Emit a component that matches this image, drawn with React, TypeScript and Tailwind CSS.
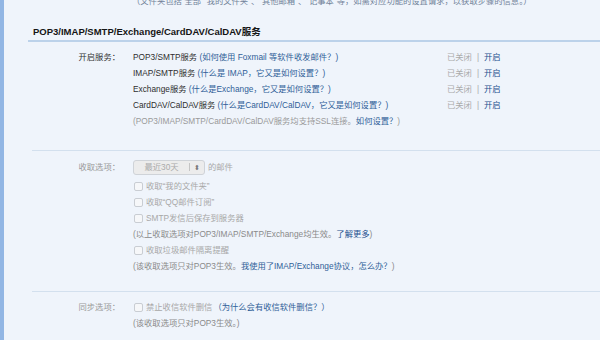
import React from "react";

const font = { fontFamily: '"Liberation Sans", "Noto Sans CJK SC", sans-serif' };

function Row({ label, labelClass = "text-[#333]", children }: { label?: string; labelClass?: string; children: React.ReactNode }) {
  return (
    <div className="flex h-[16px] items-center leading-[16px]">
      <div className={`w-[92px] shrink-0 text-right ${labelClass}`}>{label}</div>
      <div className="ml-[13px] flex min-w-0 flex-1 items-center whitespace-nowrap">{children}</div>
    </div>
  );
}

function Check({ children }: { children: React.ReactNode }) {
  return (
    <span className="flex items-center text-[#a8a8a8]">
      <span className="mr-[3px] ml-[1px] inline-block h-[9px] w-[9px] rounded-[2px] border border-[#c9cdd3] bg-[#f6f7f9]" />
      {children}
    </span>
  );
}

function ServiceRow({ label, name, help }: { label?: string; name: string; help: string }) {
  return (
    <Row label={label}>
      <div className="w-[314px] shrink-0 overflow-hidden text-[#2e2e2e]">
        {name} <span className="text-[#2f5f98]">({help})</span>
      </div>
      <span className="text-[#aaa]">已关闭</span>
      <span className="mx-[5px] text-[#aaa]">|</span>
      <span className="text-[#1d4f8e]">开启</span>
    </Row>
  );
}

export default function App() {
  return (
    <div className="flex h-[340px] w-[600px] overflow-hidden bg-[#eff4fb] text-[8.3px]" style={font}>
      <div className="w-[4px] shrink-0 bg-[#92b6e4]" />
      <div className="min-w-0 flex-1">
        <div className="mt-[-7px] h-[16px] overflow-hidden whitespace-nowrap pl-[128px] leading-[16px] text-[#72839a]">
          （文件夹包括“全部”“我的文件夹”、“其他邮箱”、“记事本”等，如需对应功能的设置请求，以获取步骤的信息。）
        </div>
        <div className="ml-[24px]">
          <div className="mt-[15px] flex h-[16px] items-center pl-[5px] text-[9.5px] font-bold leading-[16px] text-[#151515]">
            POP3/IMAP/SMTP/Exchange/CardDAV/CalDAV服务
          </div>
          <div className="h-[2px] bg-[#bcd2ea]" />
          <div className="mt-[7px]">
            <ServiceRow label="开启服务：" name="POP3/SMTP服务" help="如何使用 Foxmail 等软件收发邮件？" />
            <ServiceRow name="IMAP/SMTP服务" help="什么是 IMAP，它又是如何设置？" />
            <ServiceRow name="Exchange服务" help="什么是Exchange，它又是如何设置？" />
            <ServiceRow name="CardDAV/CalDAV服务" help="什么是CardDAV/CalDAV，它又是如何设置？" />
            <Row>
              <span className="text-[#9a9a9a]">
                (POP3/IMAP/SMTP/CardDAV/CalDAV服务均支持SSL连接。<span className="text-[#2f5f98]">如何设置？</span>)
              </span>
            </Row>
          </div>
          <div className="ml-[4px] mt-[21px] h-[1px] bg-[#d3e0ee]" />
          <div className="mt-[8px]">
            <div className="flex h-[19px] items-start leading-[16px]">
              <div className="w-[92px] shrink-0 text-right text-[#999]">收取选项：</div>
              <div className="ml-[13px] flex h-[16px] items-center whitespace-nowrap">
                <div className="flex h-[15px] w-[72px] items-center rounded-[3px] border border-[#cfd3d8] bg-[#ececec] text-[#aaa]">
                  <span className="flex-1 text-center">最近30天</span>
                  <span className="h-[8px] w-[1px] bg-[#c4c4c4]" />
                  <span className="w-[14px] text-center text-[7px] leading-[7px] text-[#777]">⬍</span>
                </div>
                <span className="ml-[3px] text-[#a8a8a8]">的邮件</span>
              </div>
            </div>
            <Row><Check>收取“我的文件夹”</Check></Row>
            <Row><Check>收取“QQ邮件订阅”</Check></Row>
            <Row><Check>SMTP发信后保存到服务器</Check></Row>
            <Row>
              <span className="text-[#8a8a8a]">
                (以上收取选项对POP3/IMAP/SMTP/Exchange均生效。<span className="text-[#1d4f8e]">了解更多</span>)
              </span>
            </Row>
            <Row><Check>收取垃圾邮件隔离提醒</Check></Row>
            <Row>
              <span className="text-[#8a8a8a]">
                (该收取选项只对POP3生效。<span className="text-[#2f5f98]">我使用了IMAP/Exchange协议，怎么办？</span>)
              </span>
            </Row>
          </div>
          <div className="ml-[4px] mt-[17px] h-[1px] bg-[#d3e0ee]" />
          <div className="mt-[7px]">
            <Row label="同步选项：" labelClass="text-[#999]">
              <Check>禁止收信软件删信</Check>
              <span className="ml-[1px] text-[#2f5f98]">（为什么会有收信软件删信？）</span>
            </Row>
            <Row>
              <span className="text-[#8a8a8a]">(该收取选项只对POP3生效。)</span>
            </Row>
          </div>
        </div>
      </div>
    </div>
  );
}
